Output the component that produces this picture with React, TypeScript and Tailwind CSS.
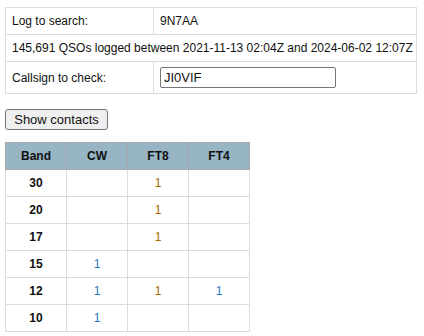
import React from "react";

const rows = [
  { band: "30", cw: "", ft8: "1", ft4: "" },
  { band: "20", cw: "", ft8: "1", ft4: "" },
  { band: "17", cw: "", ft8: "1", ft4: "" },
  { band: "15", cw: "1", ft8: "", ft4: "" },
  { band: "12", cw: "1", ft8: "1", ft4: "1" },
  { band: "10", cw: "1", ft8: "", ft4: "" },
];

const font = "font-[family-name:Liberation_Sans,Arial,sans-serif]";
const td = "border border-[#dcdcdc] px-[6px] py-0";
const th = "border border-[#a3a9ad] h-[27px] p-0 font-bold text-center";

export default function App() {
  return (
    <div className={`min-h-screen bg-white pl-[5px] pt-[7px] text-[12px] leading-[14px] text-[#111] ${font}`}>
      <table className="w-[412px] table-fixed border-collapse">
        <tbody>
          <tr className="h-[27px]">
            <td className={`${td} w-[148px]`}>Log to search:</td>
            <td className={td}>9N7AA</td>
          </tr>
          <tr className="h-[27px]">
            <td className={`${td} whitespace-nowrap`} colSpan={2}>
              145,691 QSOs logged between 2021-11-13 02:04Z and 2024-06-02 12:07Z
            </td>
          </tr>
          <tr className="h-[32px]">
            <td className={td}>Callsign to check:</td>
            <td className={td}>
              <input
                defaultValue="JI0VIF"
                className={`block w-[176px] h-[21px] border border-[#767676] rounded-[2px] px-[3px] text-[13px] text-[#111] outline-none ${font}`}
              />
            </td>
          </tr>
        </tbody>
      </table>

      <button className={`mt-[15px] block h-[21px] w-[103px] border border-[#767676] rounded-[3px] bg-[#efefef] text-[13px] leading-[15px] text-[#111] ${font}`}>
        Show contacts
      </button>

      <table className="mt-[12px] w-[245px] table-fixed border-collapse">
        <thead>
          <tr className="bg-[#97b5c3]">
            <th className={th}>Band</th>
            <th className={th}>CW</th>
            <th className={th}>FT8</th>
            <th className={th}>FT4</th>
          </tr>
        </thead>
        <tbody>
          {rows.map((r) => (
            <tr key={r.band} className="h-[27px] text-center">
              <td className={`${td} font-bold`}>{r.band}</td>
              <td className={`${td} text-[#1f78c1]`}>{r.cw}</td>
              <td className={`${td} text-[#a36d00]`}>{r.ft8}</td>
              <td className={`${td} text-[#1f78c1]`}>{r.ft4}</td>
            </tr>
          ))}
        </tbody>
      </table>
    </div>
  );
}
